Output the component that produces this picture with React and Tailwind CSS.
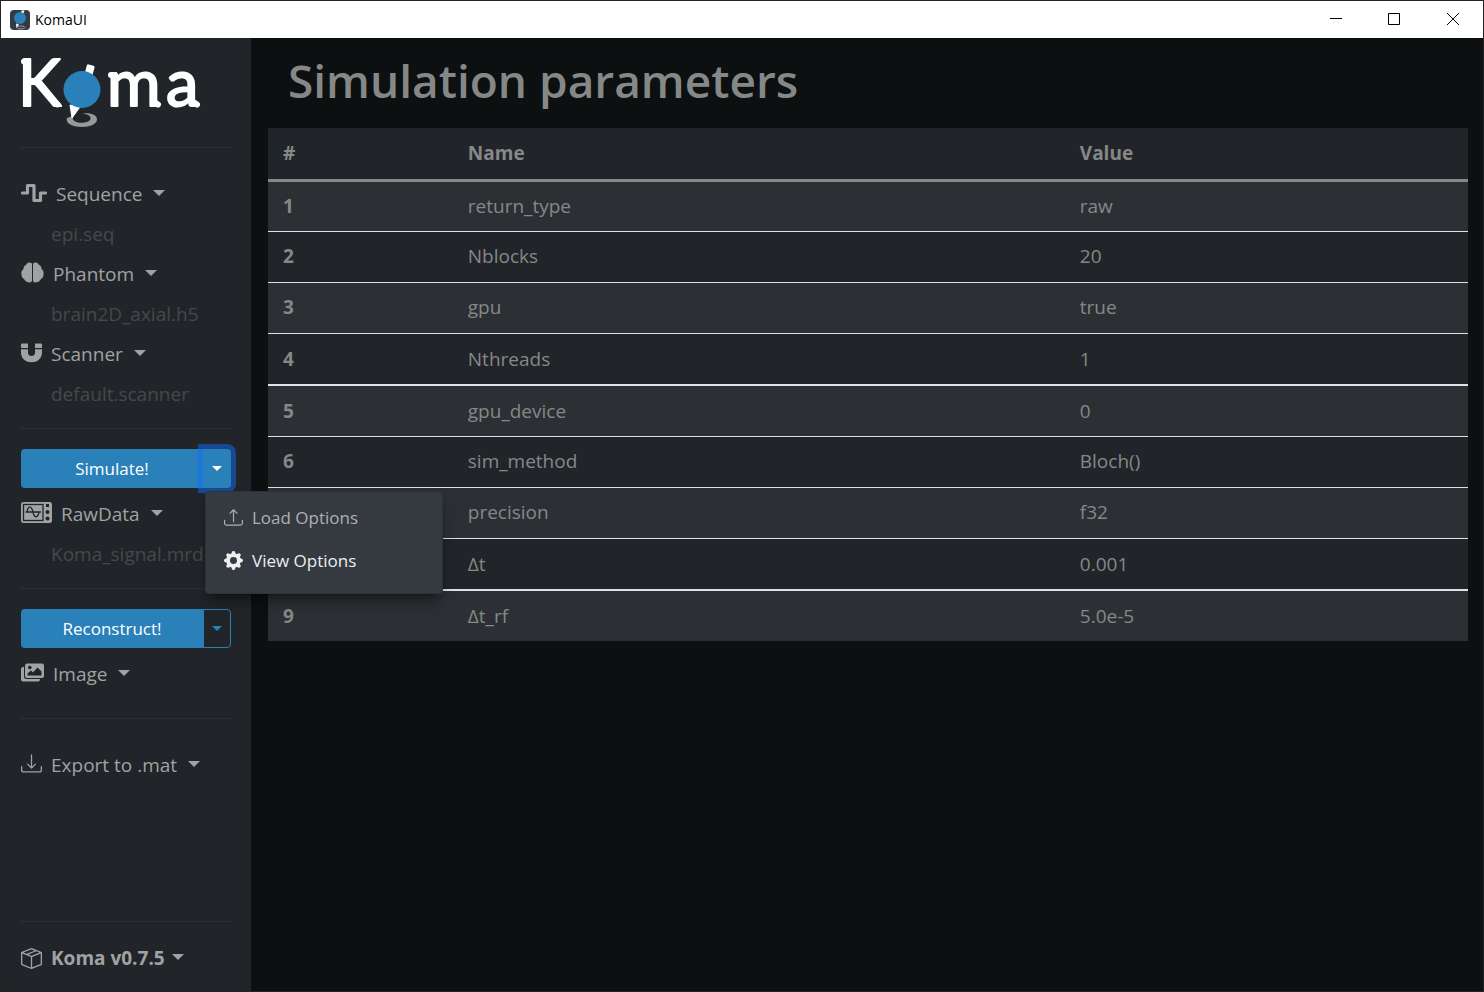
import React from "react";
import { BsBoxSeam, BsDownload, BsGearFill, BsUpload } from "react-icons/bs";

const parameters = [
  ["return_type", "raw"],
  ["Nblocks", "20"],
  ["gpu", "true"],
  ["Nthreads", "1"],
  ["gpu_device", "0"],
  ["sim_method", "Bloch()"],
  ["precision", "f32"],
  ["Δt", "0.001"],
  ["Δt_rf", "5.0e-5"],
];

function Caret({ className = "border-x-6 border-t-6" }) {
  return <span aria-hidden="true" className={`h-0 w-0 border-x-transparent ${className}`} />;
}

function AppIcon() {
  return (
    <svg width="20" height="20" viewBox="0 0 20 20" aria-hidden="true">
      <rect width="20" height="20" rx="4" fill="#343a40" />
      <ellipse cx="11" cy="17.5" rx="4" ry="1.5" fill="none" stroke="#999" />
      <path d="M11.5 0.5h3l-1 3h-2.5z M6 13.5l3 1-2.500 3.500z" fill="#fff" />
      <circle cx="10" cy="8" r="6" fill="#2a80b9" />
    </svg>
  );
}

function Logo() {
  return (
    <svg className="overflow-visible" width="180" height="72" viewBox="0 0 180 72" role="img" aria-label="Koma">
      <g
        fill="#fff"
        stroke="#fff"
        strokeWidth="2"
        strokeLinejoin="round"
        fontFamily="Lato, sans-serif"
        fontSize="65"
      >
        <text x="-3" y="50">K</text>
        <text x="86" y="50">m</text>
        <text x="145" y="50">a</text>
      </g>
      <path
        d="M3 5.500H6M34 47.500L36.500 48.500M90 19H94M134 46.500L137 48.500M173 46.500L176 48.500"
        fill="none"
        stroke="#fff"
        strokeWidth="6"
        strokeLinecap="round"
      />
      <path
        d="M46 62C44 68 53 71 61 71C69 71 76 68 76 63.500C76 58.500 69 56.500 62 57.500C68 58.500 70 60.500 69.500 63C69 66 62 67.500 57 66.500C52 65.500 51 62 52 60Z"
        fill="#999"
      />
      <path d="M49 49l10 2-8 11z" fill="#fff" stroke="#fff" strokeLinejoin="round" />
      <rect x="65" y="9" width="8" height="10" rx="1.500" fill="#fff" transform="rotate(16 69 13)" />
      <circle cx="61" cy="33.500" r="18.500" fill="#2a80b9" />
    </svg>
  );
}

function SequenceIcon() {
  return (
    <svg width="26" height="20" viewBox="0 0 26 20" aria-hidden="true">
      <path
        d="M1.500 10H6.500V2.500H13V17.500H19.500V10H24.500"
        fill="none"
        stroke="currentColor"
        strokeWidth="3.200"
        strokeLinecap="round"
        strokeLinejoin="round"
      />
    </svg>
  );
}

function BrainIcon() {
  return (
    <svg width="23" height="21" viewBox="0 0 23 21" aria-hidden="true" fill="currentColor">
      <path d="M11 1.500C9.500 0 6.500 0 5.500 2.500C3 3.500 2.500 5.500 2.500 7C.5 8.500 0 10.500.5 12.500C.5 14.500 1.500 16 3 17C4 19.500 7 20.500 8.500 20.500C10 20.500 11 19.500 11 18.500Z" />
      <path d="M12 1.500C13.500 0 16.500 0 17.500 2.500C20 3.500 20.500 5.500 20.500 7C22.500 8.500 23 10.500 22.500 12.500C22.500 14.500 21.500 16 20 17C19 19.500 16 20.500 14.500 20.500C13 20.500 12 19.500 12 18.500Z" />
    </svg>
  );
}

function MagnetIcon() {
  return (
    <svg width="21" height="20" viewBox="0 0 21 20" aria-hidden="true" fill="currentColor">
      <path d="M1 .5H6.500Q7 .5 7 1V5H0V1.500Q0 .5 1 .5ZM14.500 .5H20Q21 .5 21 1.500V5H14V1Q14 .5 14.500 .5Z" />
      <path d="M0 6.200H7V10C7 14 14 14 14 10V6.200H21V9.500C21 22.500 0 22.500 0 9.500Z" />
    </svg>
  );
}

function ImagesIcon() {
  return (
    <svg width="23" height="19" viewBox="0 0 23 19" aria-hidden="true">
      <path
        d="M3 4H2Q0 4 0 6V16.500Q0 18.500 2 18.500H17Q19 18.500 19 16.500V16H5.500Q3 16 3 13.500Z"
        fill="currentColor"
      />
      <rect x="4" y=".5" width="19" height="14.500" rx="2" fill="currentColor" />
      <path d="M6.500 12.500V10.500L10 7.500L12 9.500L16.500 4.500L20.500 8.500V12.500Z" fill="#212529" />
      <circle cx="8.800" cy="4.500" r="1.800" fill="#212529" />
    </svg>
  );
}

function ScopeIcon() {
  return (
    <svg width="31" height="21" viewBox="0 0 31 21" aria-hidden="true">
      <rect width="31" height="21" rx="2.500" fill="currentColor" />
      <rect x="2.500" y="2.500" width="19.500" height="16" fill="none" stroke="#212529" strokeWidth="1.300" />
      <path
        d="M4.500 10H20M6 10C7 3.500 10.500 3.500 12 10S16.500 16.500 18 10"
        fill="none"
        stroke="#212529"
        strokeWidth="1.300"
      />
      <rect x="25" y="2" width="3" height="3" fill="#212529" />
      <circle cx="26.500" cy="10" r="2" fill="#212529" />
      <circle cx="26.500" cy="16.500" r="2" fill="#212529" />
    </svg>
  );
}

function NavItem({ icon, label, file }) {
  return (
    <li>
      <button type="button" className="flex h-10 items-center gap-[9px] whitespace-nowrap">
        <span className="pb-[3px]">{icon}</span>
        <span>{label}</span>
        <Caret className="mb-[2px] ml-[2px] border-x-6 border-t-6" />
      </button>
      {file && <p className="h-10 pl-[30px] leading-10 whitespace-nowrap text-[#464849]">{file}</p>}
    </li>
  );
}

function Divider({ className = "" }) {
  return <hr className={`border-[#2d3135] ${className}`} />;
}

function Sidebar() {
  return (
    <aside className="flex w-[250px] shrink-0 flex-col bg-[#212529] px-5 pt-[18px] pb-[13px] text-[19px] text-[#a0a2a3]">
      <a href="#home" className="block">
        <Logo />
      </a>
      <Divider className="mt-[19px] mb-[26px]" />
      <ul>
        <NavItem icon={<SequenceIcon />} label="Sequence" file="epi.seq" />
        <NavItem icon={<BrainIcon />} label="Phantom" file="brain2D_axial.h5" />
        <NavItem icon={<MagnetIcon />} label="Scanner" file="default.scanner" />
      </ul>
      <Divider className="mt-[14px] mb-5" />
      <div className="relative flex h-[39px] text-[17px] text-white">
        <button type="button" className="flex-1 rounded-l-sm bg-[#2a80b9]">
          Simulate!
        </button>
        <button
          type="button"
          aria-label="Simulation options"
          aria-expanded="true"
          className="flex w-7 items-center justify-center rounded-r-sm bg-[#2a80b9] ring-5 ring-[#0d6efd]/50"
        >
          <Caret className="border-x-5 border-t-5" />
        </button>
        <div
          role="menu"
          className="absolute top-[42px] left-[184px] z-10 flex h-[103px] w-[238px] flex-col rounded-sm border border-[#2e3338] bg-[#343a40] pt-1 shadow-lg shadow-black/40"
        >
          <button type="button" role="menuitem" className="flex h-[43px] items-center gap-[9px] px-[18px] text-[#adb0b3]">
            <BsUpload size={19} />
            Load Options
          </button>
          <button type="button" role="menuitem" className="flex h-[43px] items-center gap-[9px] px-[18px] text-[#eceeef]">
            <BsGearFill size={19} />
            View Options
          </button>
        </div>
      </div>
      <ul className="mt-[6px]">
        <NavItem icon={<ScopeIcon />} label="RawData" file="Koma_signal.mrd" />
      </ul>
      <Divider className="mt-[14px] mb-5" />
      <div className="flex h-[39px] text-[17px] text-white">
        <button type="button" className="flex-1 rounded-l-sm bg-[#2a80b9]">
          Reconstruct!
        </button>
        <button
          type="button"
          aria-label="Reconstruction options"
          className="flex w-7 items-center justify-center rounded-r-sm border border-[#2a80b9] text-[#2a80b9]"
        >
          <Caret className="border-x-5 border-t-5" />
        </button>
      </div>
      <ul className="mt-[6px]">
        <NavItem icon={<ImagesIcon />} label="Image" />
      </ul>
      <Divider className="mt-6 mb-[26px]" />
      <ul>
        <NavItem icon={<BsDownload size={21} />} label="Export to .mat" />
      </ul>
      <div className="mt-auto">
        <Divider className="mb-4" />
        <button type="button" className="flex h-10 items-center gap-[9px] font-bold whitespace-nowrap">
          <BsBoxSeam size={21} />
          <span>Koma v0.7.5</span>
          <Caret className="-ml-[2px] mb-[2px] border-x-6 border-t-6" />
        </button>
      </div>
    </aside>
  );
}

function TitleBar() {
  return (
    <header className="flex h-[37px] items-center bg-white pl-[9px] text-black">
      <AppIcon />
      <span className="ml-[5px] flex-1 text-[14px]">KomaUI</span>
      <button type="button" aria-label="Minimize" className="flex h-full w-[58px] items-center justify-center pb-[2px]">
        <svg width="12" height="12" viewBox="0 0 12 12">
          <path d="M0 5.500h12" stroke="currentColor" />
        </svg>
      </button>
      <button type="button" aria-label="Maximize" className="flex h-full w-[58px] items-center justify-center pb-[2px]">
        <svg width="12" height="12" viewBox="0 0 12 12">
          <path d="M.5.5h11v11H.5z" fill="none" stroke="currentColor" />
        </svg>
      </button>
      <button type="button" aria-label="Close" className="flex h-full w-[60px] items-center justify-center pb-[2px]">
        <svg width="12" height="12" viewBox="0 0 12 12">
          <path d="M0 0l12 12M12 0L0 12" stroke="currentColor" />
        </svg>
      </button>
    </header>
  );
}

export default function App() {
  return (
    <div className="flex min-h-screen flex-col border border-[#252324] bg-[#0c1011] font-['Open_Sans','Noto_Sans',sans-serif]">
      <TitleBar />
      <div className="flex flex-1">
        <Sidebar />
        <main className="min-w-0 flex-1 pt-3 pr-[15px] pl-[17px] text-[#868887]">
          <h1 className="mb-[18px] pl-5 text-[46px] leading-[60px] font-semibold">Simulation parameters</h1>
          <table className="w-full table-fixed border-collapse text-left text-[19px]">
            <colgroup>
              <col className="w-[15.4%]" />
              <col className="w-[51%]" />
              <col />
            </colgroup>
            <thead className="bg-[#212529]">
              <tr className="h-[52px] border-b-3 border-[#868887]">
                <th className="px-[15px]">#</th>
                <th className="px-[15px]">Name</th>
                <th className="px-[15px]">Value</th>
              </tr>
            </thead>
            <tbody>
              {parameters.map(([name, value], index) => (
                <tr
                  key={name}
                  className="h-[51px] border-b border-[#dee2e6] odd:bg-[#2c3034] even:bg-[#212529] nth-[4n]:h-[52px] nth-[4n]:border-b-2 last:border-b-0"
                >
                  <th scope="row" className="px-[15px]">{index + 1}</th>
                  <td className="px-[15px]">{name}</td>
                  <td className="px-[15px]">{value}</td>
                </tr>
              ))}
            </tbody>
          </table>
        </main>
      </div>
    </div>
  );
}
